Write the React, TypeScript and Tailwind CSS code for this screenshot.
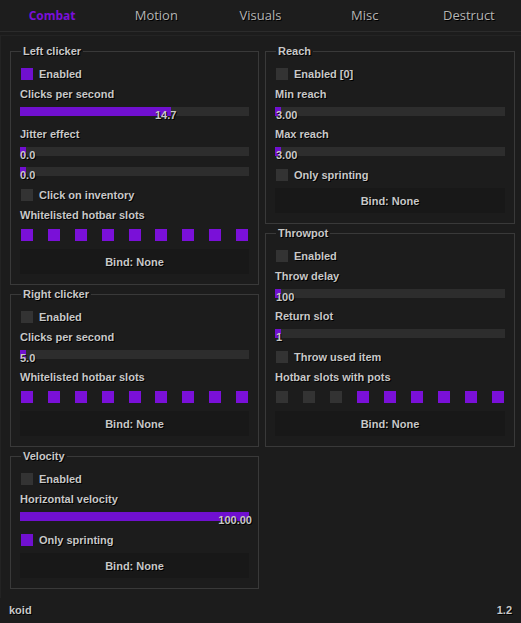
import React from "react";

const TABS = ["Combat", "Motion", "Visuals", "Misc", "Destruct"];

const txt = "text-[11px] font-bold leading-[12px] text-[#c8c8c8] [text-shadow:1px_1px_0_#000]";

function Group({ title, children }: { title: string; children: React.ReactNode }) {
  return (
    <div className="relative border border-[#393939] px-[9px] pt-[12px] pb-[10px]">
      <span className={`absolute -top-[7px] left-[10px] bg-[#1c1c1c] px-[2px] ${txt}`}>{title}</span>
      {children}
    </div>
  );
}

function Check({ label, on = false, className = "" }: { label: string; on?: boolean; className?: string }) {
  return (
    <div className={`flex h-[20px] items-center gap-[6px] pl-[1px] ${className}`}>
      <span className={on ? "h-[12px] w-[12px] bg-[#7010d0]" : "h-[12px] w-[12px] bg-[#333333]"} />
      <span className={txt}>{label}</span>
    </div>
  );
}

function Label({ children }: { children: React.ReactNode }) {
  return <div className={`flex h-[20px] items-center ${txt}`}>{children}</div>;
}

function Slider({ fill, value, pos }: { fill: number; value: string; pos: string }) {
  // fill is a fraction of the bar, grab never narrower than 6px
  return (
    <div className="h-[20px] pt-[3px]">
      <div className="relative h-[9px] bg-[#2d2d2d]">
        <div className="h-full bg-[#7010d0]" style={{ width: `max(6px, ${fill * 100}%)` }} />
        <span className={`absolute top-[2px] ${pos} ${txt}`}>{value}</span>
      </div>
    </div>
  );
}

function Slots({ on }: { on: boolean[] }) {
  return (
    <div className="flex h-[22px] justify-between px-[1px] pt-[4px]">
      {on.map((v, i) => (
        <span key={i} className={v ? "h-[12px] w-[12px] bg-[#7a10d8]" : "h-[12px] w-[12px] bg-[#333333]"} />
      ))}
    </div>
  );
}

function Bind({ className = "mt-[2px]" }: { className?: string }) {
  return (
    <div className={`flex h-[25px] items-center justify-center bg-[#181818] ${className}`}>
      <span className={txt}>Bind: None</span>
    </div>
  );
}

const ALL = [true, true, true, true, true, true, true, true, true];

export default function App() {
  return (
    <div className="flex h-[623px] w-[521px] flex-col bg-[#1c1c1c] font-['Liberation_Sans',Arial,sans-serif]">
      <div className="flex h-[32px] shrink-0 border-b border-[#2b2b2b] bg-[#1d1d1d] pt-[1px]">
        {TABS.map((t, i) => (
          <div key={t} className="flex flex-1 items-center justify-center">
            {i === 0 ? (
              <span className="font-['Open_Sans',sans-serif] text-[12px] font-bold text-[#7a10d8]">{t}</span>
            ) : (
              <span className="font-['Open_Sans',sans-serif] text-[13px] text-[#b4b4b4] [text-shadow:1px_1px_0_#000]">{t}</span>
            )}
          </div>
        ))}
      </div>

      <div className="mt-[3px] flex flex-1 gap-[6px] border-t border-l border-[#232323] pt-[15px] pl-[9px] pr-[6px]">
        <div className="flex w-[249px] flex-col gap-[9px]">
          <Group title="Left clicker">
            <Check label="Enabled" on />
            <Label>Clicks per second</Label>
            <Slider fill={0.66} value="14.7" pos="left-[135px]" />
            <Label>Jitter effect</Label>
            <Slider fill={0} value="0.0" pos="left-0" />
            <Slider fill={0} value="0.0" pos="left-0" />
            <Check label="Click on inventory" className="mt-[1px]" />
            <Label>Whitelisted hotbar slots</Label>
            <Slots on={ALL} />
            <Bind />
          </Group>

          <Group title="Right clicker">
            <Check label="Enabled" />
            <Label>Clicks per second</Label>
            <Slider fill={0} value="5.0" pos="left-0" />
            <Label>Whitelisted hotbar slots</Label>
            <Slots on={ALL} />
            <Bind />
          </Group>

          <Group title="Velocity">
            <Check label="Enabled" />
            <Label>Horizontal velocity</Label>
            <Slider fill={1} value="100.00" pos="-right-[3px]" />
            <Check label="Only sprinting" on className="mt-[1px]" />
            <Bind className="mt-[3px]" />
          </Group>
        </div>

        <div className="flex w-[250px] flex-col gap-[9px]">
          <Group title="Reach">
            <Check label="Enabled [0]" />
            <Label>Min reach</Label>
            <Slider fill={0} value="3.00" pos="left-[1px]" />
            <Label>Max reach</Label>
            <Slider fill={0} value="3.00" pos="left-[1px]" />
            <Check label="Only sprinting" className="mt-[1px]" />
            <Bind className="mt-[3px]" />
          </Group>

          <Group title="Throwpot">
            <Check label="Enabled" />
            <Label>Throw delay</Label>
            <Slider fill={0} value="100" pos="left-[1px]" />
            <Label>Return slot</Label>
            <Slider fill={0} value="1" pos="left-[1px]" />
            <Check label="Throw used item" className="mt-[1px]" />
            <Label>Hotbar slots with pots</Label>
            <Slots on={[false, false, false, true, true, true, true, true, true]} />
            <Bind />
          </Group>
        </div>
      </div>

      <div className="flex h-[25px] shrink-0 items-center justify-between px-[9px] pb-[2px]">
        <span className={txt}>koid</span>
        <span className={txt}>1.2</span>
      </div>
    </div>
  );
}
